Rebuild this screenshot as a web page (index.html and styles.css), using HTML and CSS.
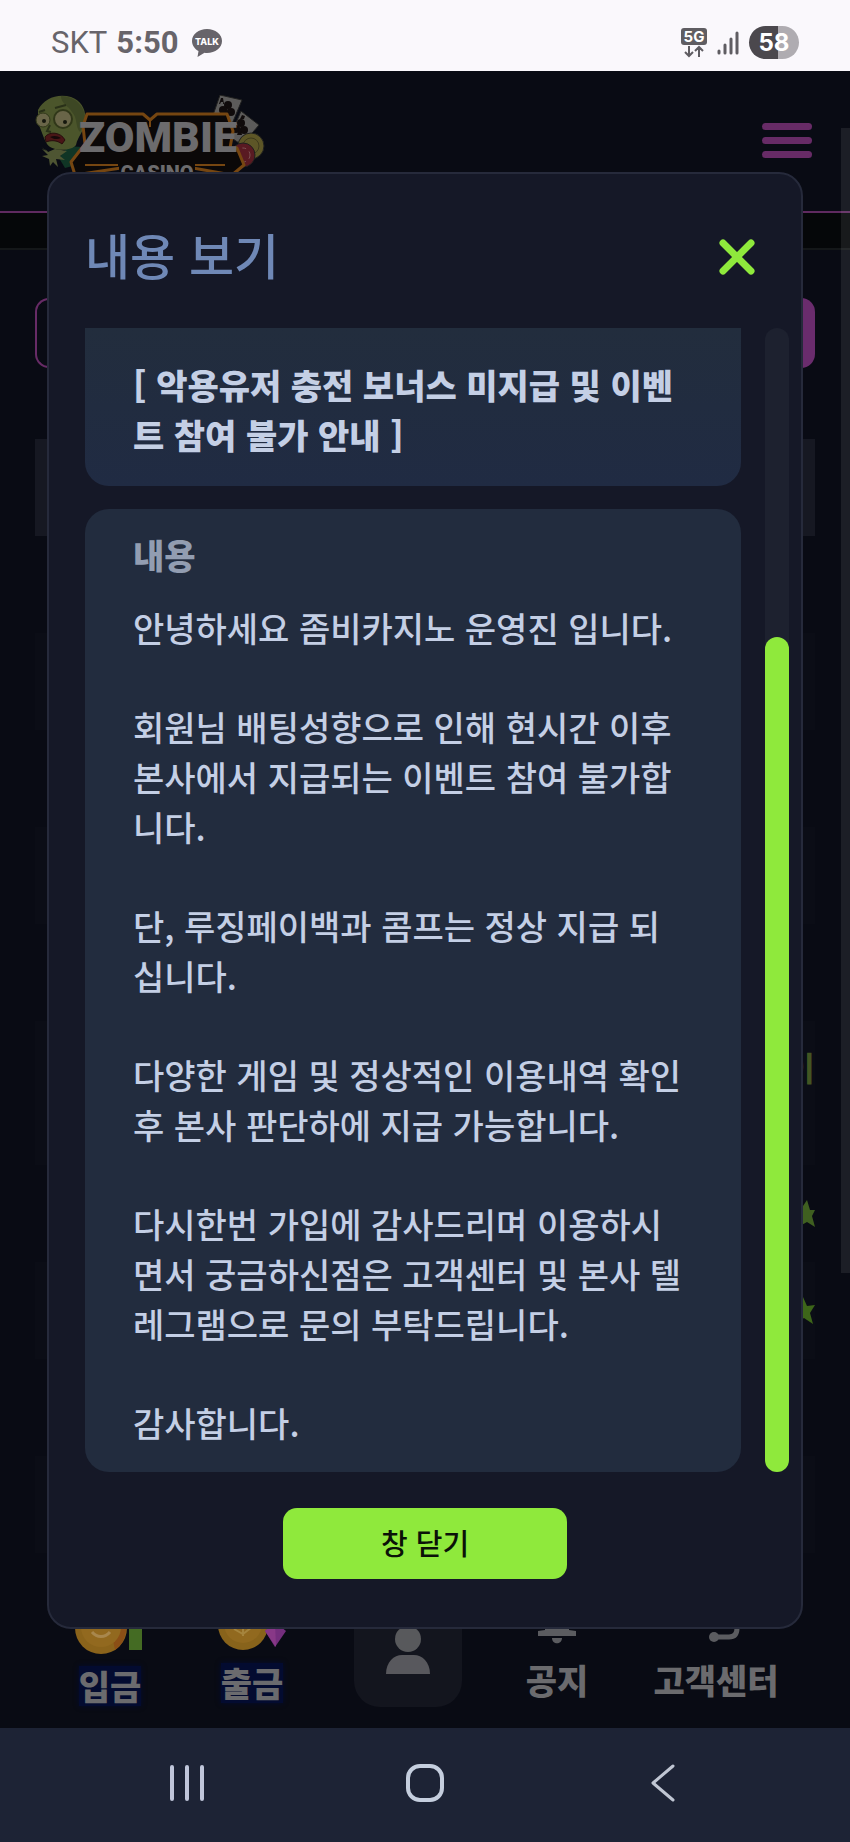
FILE: index.html
```html
<!DOCTYPE html>
<html lang="ko">
<head>
    <meta charset="UTF-8">
    <meta name="viewport" content="width=device-width, initial-scale=1.0">
    <title>ZOMBIE CASINO</title>
    <link rel="stylesheet" href="styles.css">
</head>
<body>
    <div class="status-bar">
        <span class="carrier">SKT</span>
        <span class="clock">5:50</span>
        <svg class="talk" width="30" height="28" viewBox="0 0 30 28">
            <path d="M15 0C6.700 0 0 5.300 0 12c0 4.300 2.700 8 6.500 10L5.500 28l7-4.200c.8.1 1.600.2 2.500.2 8.300 0 15-5.300 15-12S23.300 0 15 0z" fill="#67646a"/>
            <text x="15" y="16" text-anchor="middle" class="talk-text">TALK</text>
        </svg>
        <div class="status-right">
            <svg width="26" height="30" viewBox="0 0 26 30">
                <rect width="26" height="17" rx="3" fill="#5f5d62"/>
                <text x="13" y="14" text-anchor="middle" class="net-text">5G</text>
                <path d="M8 18v10M4 24l4 4 4-4M18 29V19M14 23l4-4 4 4" fill="none" stroke="#5f5d62" stroke-width="2"/>
            </svg>
            <svg width="22" height="24" viewBox="0 0 22 24">
                <path d="M2 20v2M8 14v8M14 8v14M20 2v20" fill="none" stroke="#5f5d62" stroke-width="3" stroke-linecap="round"/>
            </svg>
            <span class="battery">58</span>
        </div>
    </div>

    <div class="app">
        <header class="site-header">
            <a href="#" class="logo" aria-label="ZOMBIE CASINO">
                <svg width="232" height="92" viewBox="0 0 232 92">
                    <!-- cards and chips -->
                    <g stroke="#20201f" stroke-width="1">
                        <path d="M185 0l22 5-10 24-20-6z" fill="#5c5b5a"/>
                        <path d="M206 16l18 14-17 20-12-8z" fill="#5c5b5a"/>
                        <circle cx="216" cy="51" r="13" fill="#5d5627"/>
                        <circle cx="216" cy="51" r="8" fill="none" stroke="#3e3a1c"/>
                        <circle cx="208" cy="60" r="12" fill="#591a22"/>
                        <circle cx="208" cy="60" r="7" fill="none" stroke="#7b5153" stroke-dasharray="4 4"/>
                    </g>
                    <g fill="#100b0b">
                        <circle cx="193" cy="10" r="4"/><circle cx="188" cy="15" r="4"/><circle cx="196" cy="17" r="4"/><path d="M192 12l-3 9h5z"/>
                        <circle cx="206" cy="28" r="4"/><circle cx="201" cy="34" r="4"/><circle cx="209" cy="35" r="4"/><path d="M205 30l-3 10h5z"/>
                        <path d="M186 3l-2 6h1l1-2h2v2h1l-1-6zM207 20l-2 4h4l1-3z"/>
                    </g>
                    <!-- zombie -->
                    <path d="M33 51l14 1 2 16-19 5-6-10z" fill="#103525"/>
                    <path d="M6 52l7 5 7-3 12 2-7 5 5 4-9-1 2 8-5-5-3 4-1-7-7-3 6-1-6-6 7 3z" fill="#4e5532"/>
                    <path d="M3 15C9 3 23-2 36 2c11 4 16 14 14 26-1 8-7 13-9 22-5 7-25 6-29-1C7 40 6 33 3 29z" fill="#4b552b"/>
                    <path d="M26 1c15 0 26 12 24 27l-5 9c-5-5-2-14-8-20-3-6-11-8-11-16z" fill="#3d4724"/>
                    <circle cx="8" cy="25" r="7" fill="#696548" stroke="#303719"/>
                    <circle cx="28" cy="24" r="9" fill="#696548" stroke="#303719" stroke-width="2"/>
                    <circle cx="9" cy="26" r="2" fill="#15170e"/><circle cx="30" cy="27" r="2" fill="#15170e"/>
                    <path d="M4 17l6-2M20 13l11-3M15 30l-3 6 4 1" fill="none" stroke="#293018" stroke-width="2"/>
                    <path d="M10 42c4-6 16-5 20 3l-3 4c-5-4-11-4-16-2z" fill="#491516" stroke="#260e0d"/>
                    <path d="M15 42c4-2 8-1 11 1-4 2-8 1-11-1z" fill="#16090a"/>
                    <!-- plate -->
                    <path d="M52 19h56l7 6 7-6h70l6 17-3 17h7l7 17-12 10-39-7H86l-46 7-4-13 14-18-2-18z" fill="#0b0808" stroke="#764611" stroke-width="3" stroke-linejoin="round"/>
                    <path d="M115 24v8M83 70H50M160 70h30" stroke="#764611" stroke-width="2"/>
                    <rect x="84" y="65" width="76" height="27" fill="#0b0808"/>
                    <text x="123" y="57" text-anchor="middle" class="logo-main">ZOMBIE</text>
                    <text x="122" y="85" text-anchor="middle" class="logo-sub">CASINO</text>
                </svg>
            </a>
            <button class="menu-btn" aria-label="메뉴"><span></span><span></span><span></span></button>
        </header>
        <div class="notice-strip"></div>

        <form class="search">
            <input type="text" class="search-input" aria-label="검색">
            <button type="button" class="search-btn" aria-label="검색"></button>
        </form>

        <div class="board">
            <div class="row head"></div>
            <div class="row"></div>
            <div class="row even"></div>
            <div class="row"></div>
            <div class="row even"></div>
            <div class="row"></div>
            <div class="row even tall">이</div>
            <div class="row"><svg width="24" height="28" viewBox="0 0 24 28"><path d="M16 0l3 10h5l-3 6 3 11-8-5-9 5 3-11-8-7h8z" fill="#3f5f20"/></svg></div>
            <div class="row even"><svg width="24" height="28" viewBox="0 0 24 28"><path d="M12 0l4 9 8-1-5 8 3 11-9-6-9 6 2-11-6-7h9z" fill="#3d6619"/></svg></div>
            <div class="row"></div>
            <div class="row even"></div>
        </div>

        <nav class="tab-bar">
            <a href="#" class="tab glow">
                <svg width="72" height="60" viewBox="0 0 72 60">
                    <rect x="55" y="20" width="13" height="36" fill="#446b23"/>
                    <circle cx="27" cy="34" r="26" fill="#8a631b"/>
                    <path d="M46 18a26 26 0 0 1-5 38l-4-20z" fill="#8b4f16"/>
                    <circle cx="27" cy="33" r="20" fill="#92691f"/>
                    <path d="M18 38c5 6 13 6 18 0" fill="none" stroke="#a8874d" stroke-width="3"/>
                </svg>
                <span>입금</span>
            </a>
            <a href="#" class="tab glow">
                <svg width="72" height="57" viewBox="0 0 72 57">
                    <circle cx="27" cy="31" r="25" fill="#88631b"/>
                    <circle cx="27" cy="30" r="19" fill="#91691f"/>
                    <path d="M18 35l9 5 9-7M27 30v12" fill="none" stroke="#a5843d" stroke-width="2"/>
                    <path d="M59 28l11 9-11 16-10-16z" fill="#742e7d"/>
                    <path d="M59 28l1 25-11-16z" fill="#883887"/>
                </svg>
                <span>출금</span>
            </a>
            <a href="#" class="tab-home" aria-label="내 정보">
                <svg width="44" height="50" viewBox="0 0 44 50">
                    <circle cx="22" cy="15" r="13" fill="#58595c"/>
                    <path d="M0 50c0-12 8-19 16-19h12c8 0 16 7 16 19z" fill="#58585d"/>
                </svg>
            </a>
            <a href="#" class="tab">
                <svg width="38" height="54" viewBox="0 0 38 54">
                    <path d="M7 36V23a12 12 0 0 1 24 0v13l7 1v5H0v-5zM14 44h10c0 7-10 7-10 0z" fill="#5b5c60"/>
                </svg>
                <span>공지</span>
            </a>
            <a href="#" class="tab">
                <svg width="54" height="54" viewBox="0 0 54 54">
                    <path d="M5 34V22a20 20 0 0 1 43 0v12q0 9-8 9H27" fill="none" stroke="#5b5c60" stroke-width="5"/>
                    <path d="M4 20h8v10H4zM42 20h8v10h-8z" fill="#5b5c60"/>
                    <circle cx="25" cy="43" r="5" fill="#5b5c60"/>
                </svg>
                <span>고객센터</span>
            </a>
        </nav>

        <div class="page-scroll"></div>

        <div class="overlay">
            <div class="dialog" role="dialog" aria-labelledby="dialog-title">
                <div class="dialog-header">
                    <h2 id="dialog-title">내용 보기</h2>
                    <button class="close-x" aria-label="닫기">
                        <svg width="36" height="36" viewBox="0 0 36 36"><path d="M4 4l28 28M32 4L4 32" stroke="#8fe93c" stroke-width="7" stroke-linecap="round"/></svg>
                    </button>
                </div>
                <div class="dialog-body">
                    <div class="cards">
                        <div class="card card-title">
                            <h3>[ 악용유저 충전 보너스 미지급 및 이벤트 참여 불가 안내 ]</h3>
                        </div>
                        <div class="card card-content">
                            <h4>내용</h4>
                            <p>안녕하세요 좀비카지노 운영진 입니다.</p>
                            <p>회원님 배팅성향으로 인해 현시간 이후 본사에서 지급되는 이벤트 참여 불가합니다.</p>
                            <p>단, 루징페이백과 콤프는 정상 지급 되십니다.</p>
                            <p>다양한 게임 및 정상적인 이용내역 확인 후 본사 판단하에 지급 가능합니다.</p>
                            <p>다시한번 가입에 감사드리며 이용하시면서 궁금하신점은 고객센터 및 본사 텔레그램으로 문의 부탁드립니다.</p>
                            <p>감사합니다.</p>
                        </div>
                    </div>
                    <div class="track"><div class="thumb"></div></div>
                </div>
                <button class="close-btn">창 닫기</button>
            </div>
        </div>
    </div>

    <div class="system-nav">
        <button aria-label="최근 앱">
            <svg width="38" height="38" viewBox="0 0 38 38"><path d="M4 3v32M19 3v32M34 3v32" stroke="#c0c6da" stroke-width="4" stroke-linecap="round"/></svg>
        </button>
        <button aria-label="홈">
            <svg width="38" height="38" viewBox="0 0 38 38"><rect x="2" y="2" width="34" height="34" rx="12" fill="none" stroke="#c5cede" stroke-width="4"/></svg>
        </button>
        <button aria-label="뒤로">
            <svg width="26" height="38" viewBox="0 0 26 38"><path d="M23 2L3 19l20 17" fill="none" stroke="#c0c6d3" stroke-width="3" stroke-linecap="round" stroke-linejoin="round"/></svg>
        </button>
    </div>
</body>
</html>
```
FILE: styles.css
```css
* {
    box-sizing: border-box;
}
body {
    margin: 0;
    min-height: 100vh;
    display: flex;
    flex-direction: column;
    background: #090b14;
    font-family: "Noto Sans CJK KR", sans-serif;
}
button {
    border: 0;
    padding: 0;
    background: none;
    font-family: inherit;
}
svg {
    display: block;
}
h2, h3, h4, p {
    margin: 0;
}

/* status bar */
.status-bar {
    height: 71px;
    padding: 14px 51px 0;
    display: flex;
    align-items: center;
    background: #faf8fc;
    color: #67646a;
    font-family: Roboto, sans-serif;
    font-size: 31px;
}
.carrier {
    margin-right: 9px;
}
.clock {
    margin-right: 14px;
    font-weight: 700;
}
.talk-text {
    font: 800 9px Inter, sans-serif;
    fill: #fff;
}
.net-text {
    font: 700 15px Inter, sans-serif;
    fill: #fff;
}
.status-right {
    margin-left: auto;
    display: flex;
    align-items: center;
    gap: 10px;
}
.battery {
    width: 50px;
    height: 33px;
    line-height: 33px;
    border-radius: 17px;
    background: linear-gradient(90deg, #4b484d 58%, #afacb1 58%);
    color: #fff;
    font-family: Inter, sans-serif;
    font-size: 24px;
    font-weight: 700;
    text-align: center;
}

/* page behind the dialog */
.app {
    flex: 1;
    position: relative;
    display: flex;
    flex-direction: column;
}
.site-header {
    height: 142px;
    padding: 24px 38px 0 35px;
    display: flex;
    justify-content: space-between;
    align-items: flex-start;
    border-bottom: 2px solid #5f2a60;
}
.logo-main {
    font: 900 43px Roboto, sans-serif;
    fill: #6c6b6d;
}
.logo-sub {
    font: 900 20px Roboto, sans-serif;
    fill: #6c6b6d;
}
.menu-btn {
    width: 50px;
    margin-top: 28px;
    display: flex;
    flex-direction: column;
    gap: 7px;
}
.menu-btn span {
    width: 100%;
    height: 7px;
    border-radius: 4px;
    background: #672b66;
}
.notice-strip {
    height: 37px;
    background: #050709;
    border-bottom: 2px solid #141719;
}
.search {
    height: 70px;
    margin: 48px 35px 0;
    display: flex;
}
.search-input {
    flex: 1;
    min-width: 0;
    border: 2px solid #672b66;
    border-right: 0;
    border-radius: 14px 0 0 14px;
    background: none;
}
.search-btn {
    width: 120px;
    border-radius: 0 14px 14px 0;
    background: #6a2c6d;
}
.board {
    margin: 71px 35px 0;
}
.row {
    height: 97px;
    display: flex;
    align-items: center;
    justify-content: flex-end;
    color: #435522;
    font-size: 33px;
    font-weight: 700;
}
.row.head {
    background: #161822;
}
.row.even {
    background: #0b0d16;
}
.row.tall {
    height: 144px;
    padding-bottom: 52px;
}
.tab-bar {
    height: 134px;
    margin-top: auto;
    padding: 0 39px;
    display: grid;
    grid-template-columns: 142fr 142fr 170fr 128fr 190fr;
    justify-items: center;
    align-items: start;
}
.tab {
    display: flex;
    flex-direction: column;
    align-items: center;
    gap: 12px;
    color: #6b6b6e;
    font-size: 34px;
    font-weight: 900;
    line-height: 40px;
    text-decoration: none;
}
.glow span {
    background: #030b30;
    box-shadow: 0 0 5px #030b30;
}
.tab-home {
    width: 108px;
    height: 113px;
    padding-top: 30px;
    display: flex;
    justify-content: center;
    border-radius: 26px;
    background: #13151e;
}
.page-scroll {
    position: absolute;
    top: 57px;
    right: 0;
    bottom: 455px;
    width: 9px;
    background: rgba(255, 255, 255, 0.08);
}

/* dialog */
.overlay {
    position: absolute;
    inset: 0;
    padding: 101px 47px 0;
}
.dialog {
    padding-bottom: 48px;
    display: flex;
    flex-direction: column;
    border: 2px solid #262a3b;
    border-radius: 24px;
    background: #151827;
}
.dialog-header {
    height: 154px;
    padding: 12px 46px 0 36px;
    display: flex;
    align-items: center;
    justify-content: space-between;
}
.dialog-header h2 {
    padding-bottom: 8px;
    color: #6f88b6;
    font-size: 49px;
    font-weight: 500;
}
.dialog-body {
    padding: 0 12px 0 36px;
    display: flex;
    gap: 24px;
}
.cards {
    flex: 1;
    display: flex;
    flex-direction: column;
    gap: 23px;
}
.card {
    padding: 21px 58px 24px 48px;
    border-radius: 24px;
    background: #222c3e;
    color: #c4cfe5;
    font-size: 34px;
    font-weight: 500;
    line-height: 50px;
}
.card-title {
    padding-top: 32px;
    padding-bottom: 26px;
    border-radius: 0 0 24px 24px;
    background: linear-gradient(#222d3d, #202b43);
}
.card h3 {
    font-size: 34px;
    font-weight: 900;
}
.card h4 {
    margin-bottom: 23px;
    color: #929db1;
    font-size: 34px;
    font-weight: 900;
}
.card p + p {
    margin-top: 49px;
}
.track {
    width: 24px;
    display: flex;
    align-items: flex-end;
    border-radius: 12px;
    background: #1d212f;
}
.thumb {
    width: 100%;
    height: 73%;
    border-radius: 12px;
    background: #8fe93c;
}
.close-btn {
    width: 284px;
    height: 71px;
    margin: 36px auto 0;
    padding-bottom: 4px;
    border-radius: 14px;
    background: #8fe93c;
    color: #0b1208;
    font-size: 29px;
    font-weight: 500;
}

/* system navigation */
.system-nav {
    height: 114px;
    padding: 0 68px 4px;
    display: flex;
    background: #1d2335;
}
.system-nav button {
    flex: 1;
    display: flex;
    align-items: center;
    justify-content: center;
}
```
